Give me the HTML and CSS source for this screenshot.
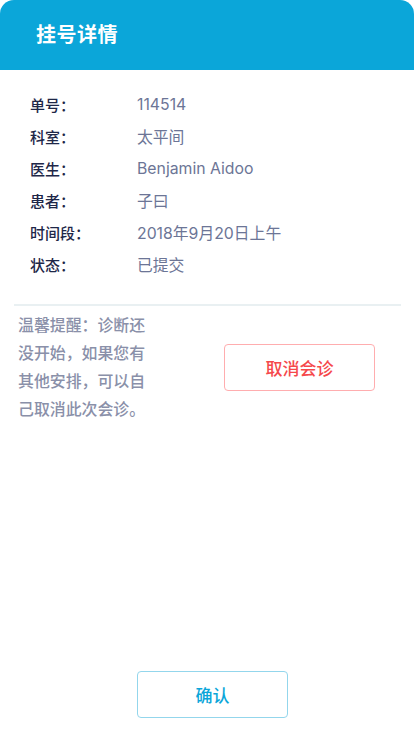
FILE: index.html
```html
<!DOCTYPE html>
<html lang="zh">
<head>
<meta charset="utf-8">
<link rel="stylesheet" href="styles.css">
</head>
<body>
<div class="page">
  <header class="header"><h1 class="title">挂号详情</h1></header>
  <div class="info">
    <div class="row"><span class="label">单号：</span><span class="value">114514</span></div>
    <div class="row"><span class="label">科室：</span><span class="value">太平间</span></div>
    <div class="row"><span class="label">医生：</span><span class="value">Benjamin Aidoo</span></div>
    <div class="row"><span class="label">患者：</span><span class="value">子曰</span></div>
    <div class="row"><span class="label">时间段：</span><span class="value">2018年9月20日上午</span></div>
    <div class="row"><span class="label">状态：</span><span class="value">已提交</span></div>
  </div>
  <div class="divider"></div>
  <div class="tip-section">
    <p class="tip">温馨提醒：诊断还没开始，如果您有其他安排，可以自己取消此次会诊。</p>
    <button class="btn-cancel">取消会诊</button>
  </div>
  <div class="footer">
    <button class="btn-confirm">确认</button>
  </div>
</div>
</body>
</html>
```
FILE: styles.css
```css
* { box-sizing: border-box; }
html, body { margin: 0; padding: 0; background: #fff; }
body { font-family: Inter, "Noto Sans CJK SC", "Noto Sans", sans-serif; }
.page { width: 414px; height: 736px; display: flex; flex-direction: column; }
.header {
  height: 70px;
  background: #0ba6d9;
  border-radius: 14px 14px 0 0;
  display: flex;
  align-items: center;
  padding-left: 36px;
}
.title { margin: 0; color: #fff; font-size: 20px; font-weight: 700; line-height: 1; letter-spacing: 0.5px; }
.info { padding: 18px 0 0 30px; }
.row { display: flex; height: 32px; align-items: center; font-size: 15px; }
.label { width: 107px; color: #1e2748; font-weight: 500; }
.value { color: #6c7596; font-size: 15.8px; }
.divider { margin: 24px 13px 0 14px; height: 2px; background: #e9f0f2; }
.tip-section { display: flex; align-items: center; padding: 6px 0 0 18px; }
.tip { margin: 0; width: 132px; font-size: 15.9px; line-height: 28px; color: #8a90a9; font-weight: 500; }
.btn-cancel {
  margin-left: 74px;
  margin-top: -2px;
  width: 151px; height: 47px;
  border: 1px solid #ffadaf; border-radius: 4px;
  background: #fff; color: #f5484b;
  font-family: inherit; font-size: 17px; font-weight: 500;
}
.footer { margin-top: auto; padding: 0 0 18px 137px; }
.btn-confirm {
  width: 151px; height: 47px;
  border: 1px solid #93d6ec; border-radius: 4px;
  background: #fff; color: #0ba6d9;
  font-family: inherit; font-size: 17px; font-weight: 500;
}
```
